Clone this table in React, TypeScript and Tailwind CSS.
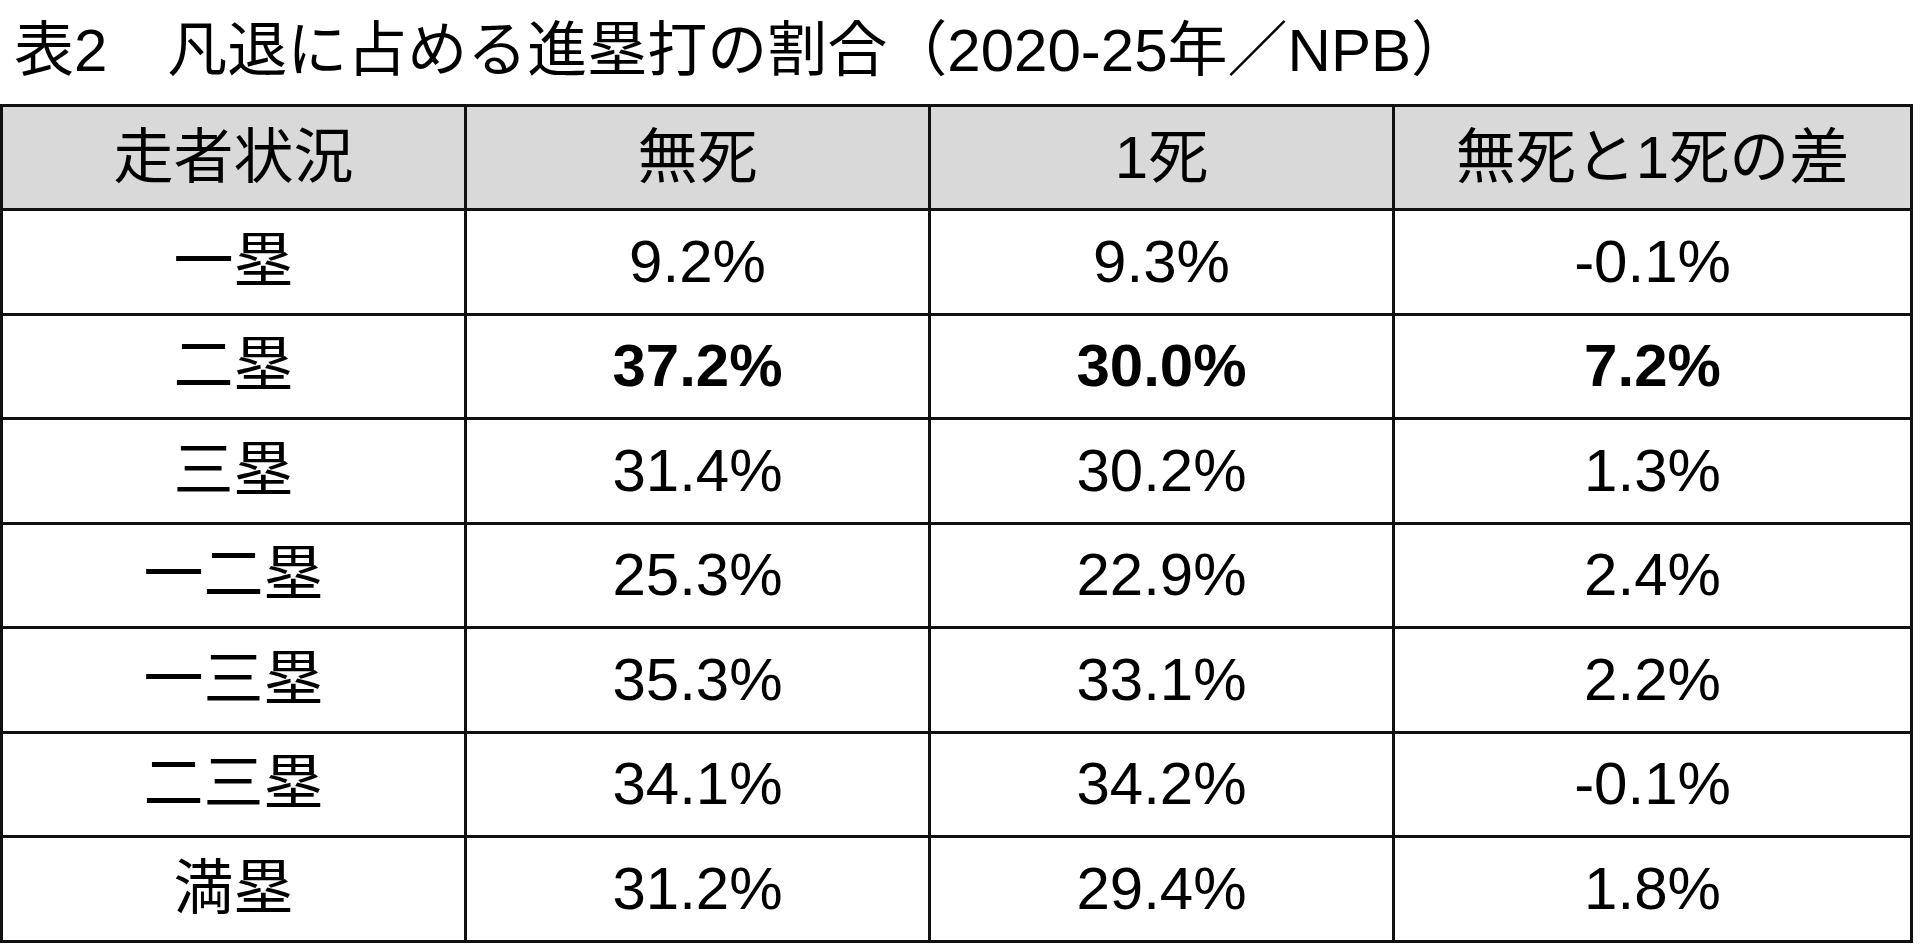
const header = ['走者状況', '無死', '1死', '無死と1死の差'];

type Row = { label: string; values: string[]; bold?: boolean };

const rows: Row[] = [
  { label: '一塁', values: ['9.2%', '9.3%', '-0.1%'] },
  { label: '二塁', values: ['37.2%', '30.0%', '7.2%'], bold: true },
  { label: '三塁', values: ['31.4%', '30.2%', '1.3%'] },
  { label: '一二塁', values: ['25.3%', '22.9%', '2.4%'] },
  { label: '一三塁', values: ['35.3%', '33.1%', '2.2%'] },
  { label: '二三塁', values: ['34.1%', '34.2%', '-0.1%'] },
  { label: '満塁', values: ['31.2%', '29.4%', '1.8%'] },
];

export default function App() {
  return (
    <div className="w-[1920px] h-[946px] bg-white text-black font-['Liberation_Sans','Noto_Sans_CJK_JP',sans-serif]">
      <div className="h-[104px] flex items-center pl-[14px] pb-[2px] text-[60px] leading-none">
        表2　凡退に占める進塁打の割合（2020-25年／NPB）
      </div>
      <table className="table-fixed border-collapse w-[1910px] text-[60px] leading-none">
        <colgroup>
          <col className="w-[464px]" />
          <col className="w-[464px]" />
          <col className="w-[464px]" />
          <col className="w-[518px]" />
        </colgroup>
        <thead>
          <tr className="h-[104px] bg-[#d9d9d9]">
            {header.map((h) => (
              <th key={h} className="border-[3px] border-[#111] font-normal text-center align-middle">
                {h}
              </th>
            ))}
          </tr>
        </thead>
        <tbody>
          {rows.map((r) => (
            <tr key={r.label} className="h-[104.5px]">
              <td className="border-[3px] border-[#111] text-center align-middle">{r.label}</td>
              {r.values.map((v, i) => (
                <td
                  key={i}
                  className={
                    'border-[3px] border-[#111] text-center align-middle ' +
                    (r.bold ? 'font-bold' : 'font-normal')
                  }
                >
                  {v}
                </td>
              ))}
            </tr>
          ))}
        </tbody>
      </table>
    </div>
  );
}
